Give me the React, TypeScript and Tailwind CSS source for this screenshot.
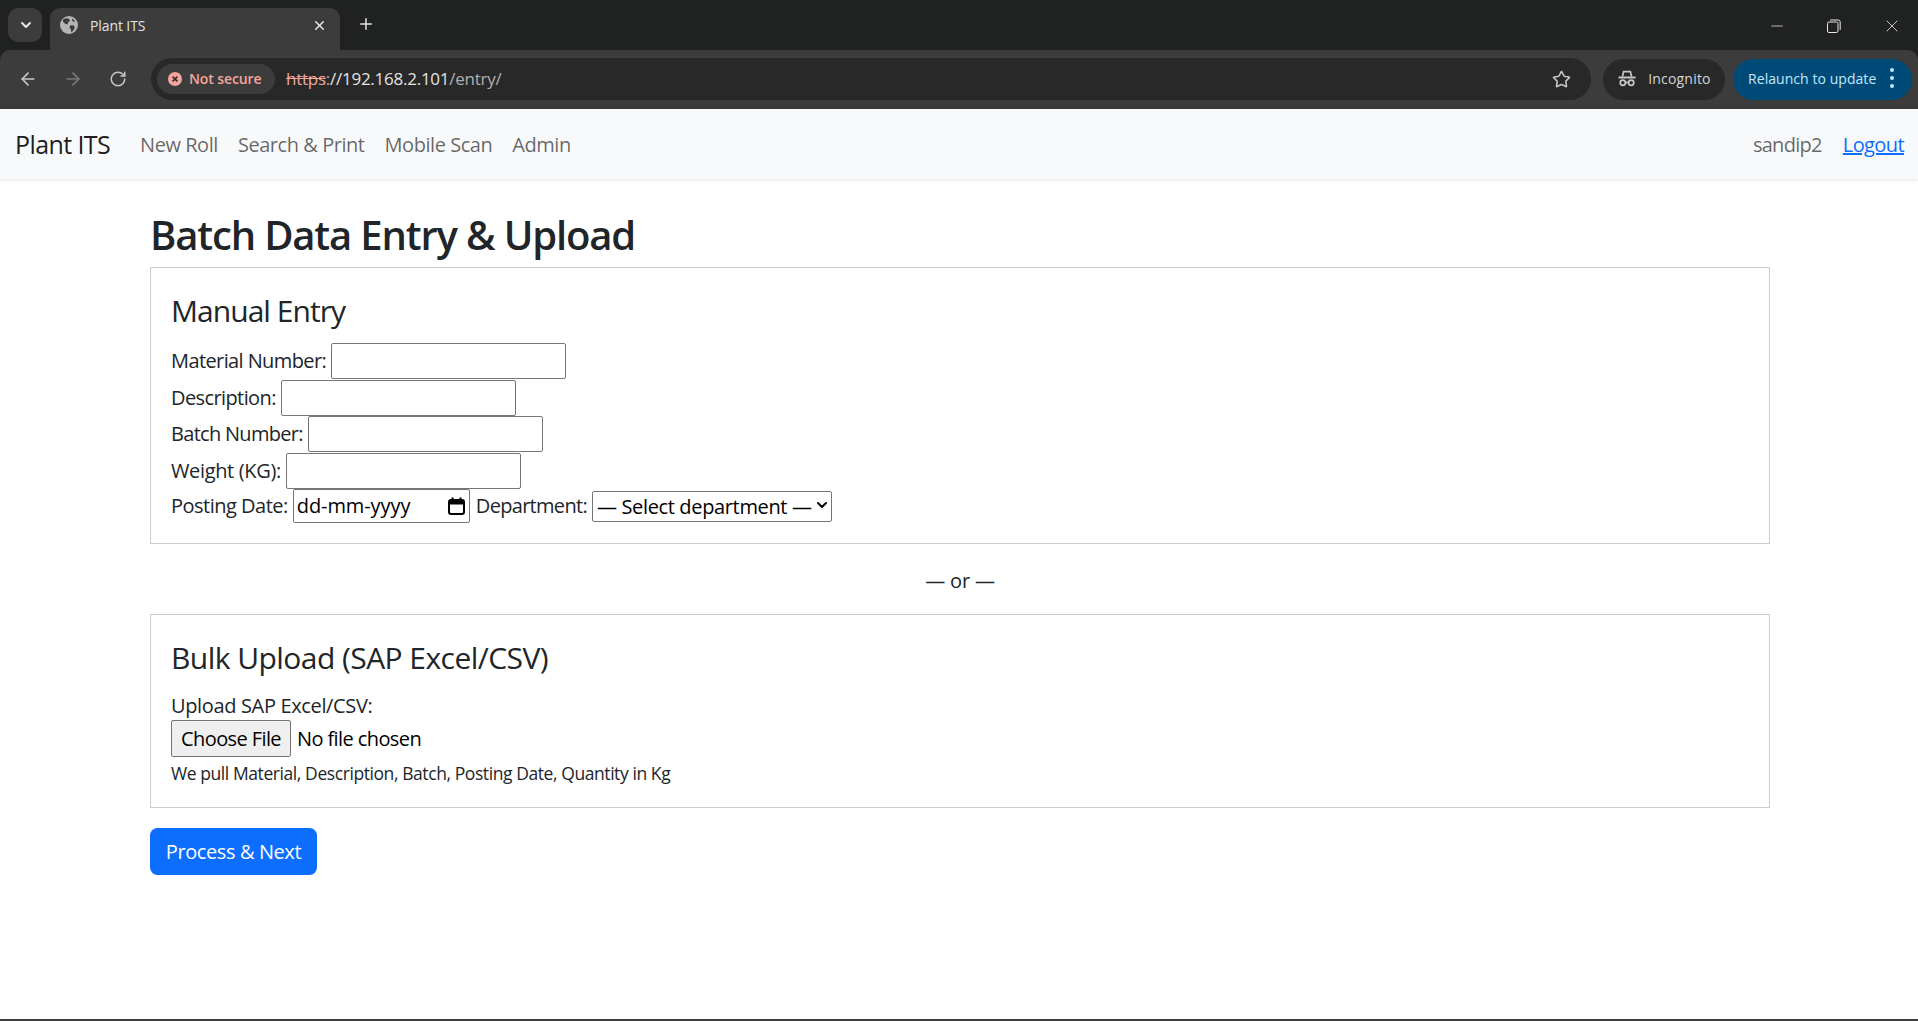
import React from 'react';
import { ArrowLeft, ArrowRight, ChevronDown, Minus, Plus, RotateCw, Star, X } from 'lucide-react';

const TabGlobeIcon: React.FC = () => (
  <svg width="18" height="18" viewBox="0 0 18 18" className="shrink-0">
    <circle cx="9" cy="9" r="9" fill="#b4b4b4" />
    <path d="M3 3.5 6 2.2l3 .6 1 2-2 1.6-.4 2-2.4-.6L3 5.8z" fill="#3c3c3c" />
    <path d="M10.4 9.2l3.4.4 1 2.2-2 3.4-1.6.8-.4-3-1.4-1.6z" fill="#3c3c3c" />
    <path d="M12.5 2.6l2.6 2.6-1.6.8-1.4-1.4z" fill="#3c3c3c" />
  </svg>
);

const IncognitoIcon: React.FC = () => (
  <svg width="20" height="20" viewBox="0 0 20 20" fill="none" stroke="#c7c7c7" strokeWidth="1.7">
    <path d="M5.5 8.5 6.6 3.6h6.8l1.1 4.9" />
    <path d="M1.5 9.5h17" strokeWidth="2" />
    <circle cx="5.8" cy="14.8" r="2.6" />
    <circle cx="14.2" cy="14.8" r="2.6" />
    <path d="M8.4 14.5h3.2" />
  </svg>
);

const RestoreIcon: React.FC = () => (
  <svg width="14" height="14" viewBox="0 0 14 14" fill="none" stroke="#e8e8e8" strokeWidth="1">
    <rect x="0.5" y="3" width="10.5" height="10.5" rx="1.5" />
    <path d="M3.2 1h8a2 2 0 0 1 2 2v8" />
  </svg>
);

const NotSecureIcon: React.FC = () => (
  <svg width="16" height="16" viewBox="0 0 16 16">
    <circle cx="8" cy="8" r="7" fill="#f2a59c" />
    <path d="M5.6 5.6l4.8 4.8M10.4 5.6l-4.8 4.8" stroke="#3a2a28" strokeWidth="1.6" />
  </svg>
);

const BrowserChrome: React.FC = () => (
  <div className="bg-[#202221] tracking-[-0.1px]">
    <div className="flex h-[50px] items-start pl-2 pt-2">
      <button className="flex h-[34px] w-[34px] items-center justify-center rounded-[10px] bg-[#3c3c3c] pl-[1px] text-[#e3e3e3]">
        <ChevronDown size={16} strokeWidth={3} />
      </button>
      <div className="relative ml-2 flex h-[42px] w-[290px] items-center rounded-t-[10px] bg-[#3c3c3c] pb-[8px] pl-[10px] pr-[13px]">
        <TabGlobeIcon />
        <span className="ml-[12px] flex-1 text-[14px] text-[#e3e3e3]">Plant ITS</span>
        <X size={15} strokeWidth={2.5} className="text-[#e3e3e3]" />
      </div>
      <Plus size={18} strokeWidth={2} className="ml-[17px] mt-[7px] text-[#e3e3e3]" />
      <div className="ml-auto flex items-center gap-[41px] pr-[16px] pt-[8px] text-[#e8e8e8]">
        <Minus size={18} strokeWidth={1} />
        <RestoreIcon />
        <X size={20} strokeWidth={1} />
      </div>
    </div>
    <div className="flex h-[59px] items-center rounded-t-[10px] bg-[#3c3c3c] pb-[1px] pl-[18px] pr-[6px]">
      <ArrowLeft size={20} strokeWidth={2} className="text-[#c7c7c7]" />
      <ArrowRight size={20} strokeWidth={2} className="ml-[25px] text-[#7a7a7a]" />
      <RotateCw size={18} strokeWidth={2} className="ml-[26px] text-[#c7c7c7]" />
      <div className="ml-[24px] flex h-[42px] w-[1441px] items-center rounded-full bg-[#282828] pl-[6px] pr-[20px]">
        <div className="flex h-[30px] w-[118px] items-center rounded-full bg-[#3c3c3c] pb-[1px] pl-[10px]">
          <NotSecureIcon />
          <span className="ml-[6px] text-[14px] font-semibold text-[#f2a59c]">Not secure</span>
        </div>
        <span className="ml-[11px] text-[17px] tracking-[-0.25px] text-[#e3e3e3]">
          <span className="text-[#f2a59c] line-through">https</span>
          <span className="text-[#b0b0b0]">:</span>
          //192.168.2.101<span className="text-[#b0b0b0]">/entry/</span>
        </span>
        <Star size={19} strokeWidth={2} className="ml-auto text-[#c7c7c7]" />
      </div>
      <div className="ml-[12px] flex h-[41px] w-[122px] items-center rounded-full bg-[#282828] pb-[2px] pl-[14px] text-[14px] tracking-[0.2px] text-[#d5d5d5]">
        <IncognitoIcon />
        <span className="ml-[11px]">Incognito</span>
      </div>
      <div className="ml-[8px] flex h-[41px] w-[179px] items-center rounded-full bg-[#004a77] pb-[2px] pl-[15px] text-[14px] tracking-[0.05px] text-[#c2e7ff]">
        <span>Relaunch to update</span>
        <span className="ml-[14px] flex flex-col gap-[4px]">
          <span className="h-[4px] w-[4px] rounded-full bg-[#c2e7ff]" />
          <span className="h-[4px] w-[4px] rounded-full bg-[#c2e7ff]" />
          <span className="h-[4px] w-[4px] rounded-full bg-[#c2e7ff]" />
        </span>
      </div>
    </div>
  </div>
);

const Navbar: React.FC = () => (
  <nav className="flex h-[70px] items-center bg-[#f8f9fa] pl-[15px] pr-[14px] pt-[1px] shadow-[0_1px_4px_rgba(0,0,0,0.1)]">
    <span className="text-[25px] text-[#000000e6]">Plant ITS</span>
    <div className="ml-[30px] flex items-center gap-[20px] tracking-[-0.45px] text-[#00000099]">
      <a>New Roll</a>
      <a>Search &amp; Print</a>
      <a>Mobile Scan</a>
      <a>Admin</a>
    </div>
    <span className="ml-auto tracking-[-0.7px] text-[#00000099]">sandip2</span>
    <a className="ml-[21px] text-[#0d6efd] underline">Logout</a>
  </nav>
);

const fieldClass = 'ml-[5px] h-[36px] w-[235px] rounded-[2px] border border-[#767676] bg-white';

const TextRow: React.FC<{ label: string; labelClass?: string }> = ({ label, labelClass }) => (
  <div className="flex h-[36.5px] items-center">
    <label className={labelClass}>{label}</label>
    <input type="text" className={fieldClass} />
  </div>
);

const App: React.FC = () => (
  <div className="flex h-[1021px] flex-col overflow-hidden border-b-2 border-[#3c3c3c] bg-white font-['Open_Sans',sans-serif] text-[20px] tracking-[-0.6px] text-[#212529]">
    <BrowserChrome />
    <Navbar />
    <main className="px-[150px] pr-[148px]">
      <h1 className="mt-[32px] text-[40px] font-semibold leading-[48px] tracking-[-1.15px]">Batch Data Entry &amp; Upload</h1>
      <section className="mt-[8px] h-[277px] border border-[#cccccc] px-[20px] pt-[25px]">
        <h2 className="text-[30px] leading-[36px] tracking-[-0.95px]">Manual Entry</h2>
        <div className="mt-[14px]">
          <TextRow label="Material Number:" />
          <TextRow label="Description:" />
          <TextRow label="Batch Number:" labelClass="tracking-[-0.7px]" />
          <TextRow label="Weight (KG):" labelClass="tracking-[-0.35px]" />
          <div className="flex h-[34px] items-center">
            <label className="tracking-[-0.5px]">Posting Date:</label>
            <div className="ml-[5px] flex h-[34px] w-[177px] items-center rounded-[2px] border border-[#767676] pl-[3px] pr-[4px] tracking-[-0.1px] text-black">
              <span className="flex-1">dd-mm-yyyy</span>
              <svg width="17" height="18" viewBox="0 0 17 18" fill="none" stroke="#000" strokeWidth="2">
                <rect x="1" y="3" width="15" height="14" rx="2" />
                <path d="M1 5.5h15" strokeWidth="4" />
                <path d="M4.5 0.5v3M12.5 0.5v3" />
              </svg>
            </div>
            <label className="ml-[6px] tracking-[-0.7px]">Department:</label>
            <div className="relative ml-[5px] h-[31px] w-[240px]">
              <select className="h-full w-full appearance-none rounded-[2px] border border-[#767676] pl-[4px] tracking-[-0.35px] text-black">
                <option>— Select department —</option>
              </select>
              <ChevronDown size={16} strokeWidth={3} className="absolute right-[2px] top-[6px] text-black" />
            </div>
          </div>
        </div>
      </section>
      <p className="mt-[23px] text-center leading-[27px] tracking-[-0.2px]">— or —</p>
      <section className="mt-[20px] h-[194px] border border-[#cccccc] px-[20px] pt-[25px]">
        <h2 className="text-[30px] leading-[36px] tracking-[-0.55px]">Bulk Upload (SAP Excel/CSV)</h2>
        <label className="mt-[15px] block leading-[30px] tracking-[-0.35px]">Upload SAP Excel/CSV:</label>
        <div className="-mt-[1px] flex h-[37px] items-center">
          <button className="h-[37px] w-[120px] rounded-[2px] border border-[#767676] bg-[#efefef] text-black">Choose File</button>
          <span className="ml-[6px] text-black">No file chosen</span>
        </div>
        <p className="mt-[3px] text-[17.5px] leading-[26px] tracking-[-0.42px]">We pull Material, Description, Batch, Posting Date, Quantity in Kg</p>
      </section>
      <button className="mt-[20px] h-[47px] w-[167px] rounded-[7.5px] bg-[#0d6efd] tracking-[-0.4px] text-white">Process &amp; Next</button>
    </main>
  </div>
);

export default App;
